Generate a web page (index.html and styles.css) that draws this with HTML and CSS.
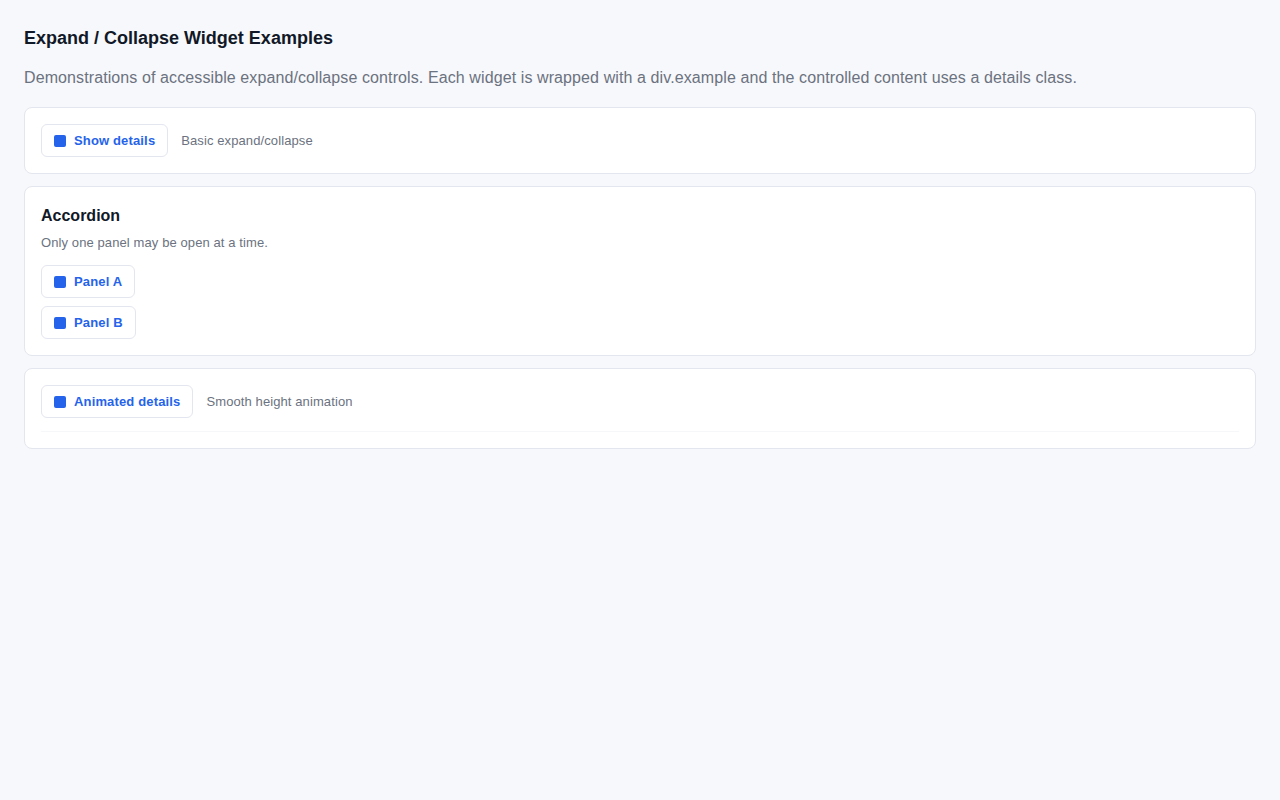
FILE: index.html
```html
<!doctype html>
<html>
<head>
    <meta charset="utf-8">
    <title>Expand / Collapse Widget Examples</title>
    <link rel="stylesheet" href="styles.css">
</head>
<body>
<h1 class='title'>Expand / Collapse Widget Examples</h1>
<p class='lead'>Demonstrations of accessible expand/collapse controls. Each widget is wrapped with a div.example and the controlled content uses a details class.</p>

<div class='example'>
	<div class='row'>
		<button class='toggle' aria-expanded='false'><span class='ico'></span>Show details</button>
		<span class='hint'>Basic expand/collapse</span>
	</div>
	<div class='details' hidden>Here are some extra details.</div>
</div>

<div class='example'>
	<h2 class='sub'>Accordion</h2>
	<p class='note'>Only one panel may be open at a time.</p>
	<div class='stack'>
		<button class='toggle' aria-expanded='false'><span class='ico'></span>Panel A</button>
		<div class='details' hidden>Panel A content.</div>
		<button class='toggle' aria-expanded='false'><span class='ico'></span>Panel B</button>
		<div class='details' hidden>Panel B content.</div>
	</div>
</div>

<div class='example'>
	<div class='row'>
		<button class='toggle' aria-expanded='false'><span class='ico'></span>Animated details</button>
		<span class='hint'>Smooth height animation</span>
	</div>
	<div class='details anim'></div>
</div>
</body>
</html>
```

FILE: styles.css
```css
*{margin: 0;padding: 0;box-sizing: border-box;}
body{
	background: #f7f8fb;
	padding: 24px;
	font-family: "Liberation Sans", Arial, sans-serif;
	color: #111827;
	letter-spacing: 0.1px;
}
.title{font-size: 18px;font-weight: bold;line-height: 28px;letter-spacing: 0;}
.lead{font-size: 16px;color: #6b7280;line-height: 24px;margin-top: 14px;margin-bottom: 17px;}

.example{
	background: #fff;border: 1px solid #e3e6ee;border-radius: 8px;
	padding: 16px;margin-bottom: 12px;
}
.row{display: flex;align-items: center;gap: 13px;}
.hint{font-size: 13px;color: #6b7280;}

.toggle{
	display: inline-flex;align-items: center;gap: 8px;
	height: 33px;padding: 0 12px;
	background: #fff;border: 1px solid #e3e6ee;border-radius: 6px;
	font-family: inherit;font-size: 13px;font-weight: bold;color: #2563eb;
	letter-spacing: 0.15px;
	cursor: pointer;
}
.ico{width: 12px;height: 12px;border-radius: 2px;background: #2563eb;}

.sub{font-size: 16px;font-weight: bold;line-height: 22px;margin-top: 2px;letter-spacing: 0;}
.note{font-size: 13px;color: #6b7280;line-height: 18px;margin-top: 7px;}
.stack{display: flex;flex-direction: column;align-items: flex-start;gap: 8px;margin-top: 13px;}

.details.anim{height: 0;overflow: hidden;margin-top: 13px;border-top: 1px solid #f6f7f9;}
```
